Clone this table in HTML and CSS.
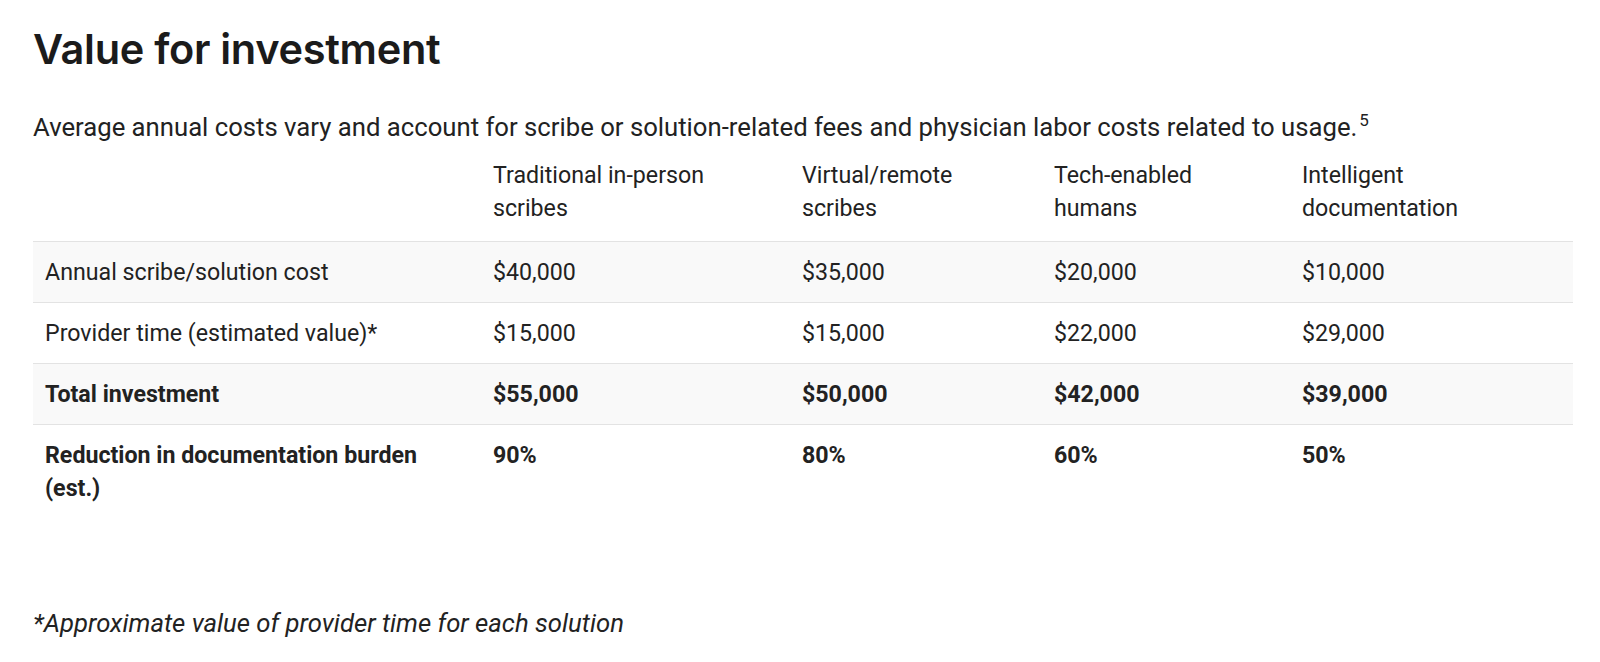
FILE: index.html
```html
<!DOCTYPE html>
<html lang="en">
<head>
<meta charset="utf-8">
<title>Value for investment</title>
<link rel="stylesheet" href="styles.css">
</head>
<body>
<main class="page">
  <h2 class="title">Value for investment</h2>
  <p class="intro">Average annual costs vary and account for scribe or solution-related fees and physician labor costs related to usage.<sup>5</sup></p>
  <table class="cost-table">
    <thead>
      <tr>
        <th class="label-col"></th>
        <th>Traditional in-person<br>scribes</th>
        <th>Virtual/remote<br>scribes</th>
        <th>Tech-enabled<br>humans</th>
        <th>Intelligent<br>documentation</th>
      </tr>
    </thead>
    <tbody>
      <tr class="shade">
        <td>Annual scribe/solution cost</td>
        <td>$40,000</td>
        <td>$35,000</td>
        <td>$20,000</td>
        <td>$10,000</td>
      </tr>
      <tr>
        <td>Provider time (estimated value)*</td>
        <td>$15,000</td>
        <td>$15,000</td>
        <td>$22,000</td>
        <td>$29,000</td>
      </tr>
      <tr class="shade strong">
        <td>Total investment</td>
        <td>$55,000</td>
        <td>$50,000</td>
        <td>$42,000</td>
        <td>$39,000</td>
      </tr>
      <tr class="strong last">
        <td>Reduction in documentation burden<br>(est.)</td>
        <td>90%</td>
        <td>80%</td>
        <td>60%</td>
        <td>50%</td>
      </tr>
    </tbody>
  </table>
  <p class="footnote">*Approximate value of provider time for each solution</p>
</main>
</body>
</html>
```
FILE: styles.css
```css
html, body {
  margin: 0;
  padding: 0;
  background: #ffffff;
}

.page {
  padding: 21px 27px 0 33px;
  font-family: Roboto, "Liberation Sans", sans-serif;
  color: #222222;
}

.title {
  margin: 0;
  font-family: Inter, "Open Sans", sans-serif;
  font-weight: 600;
  font-size: 41.5px;
  line-height: 56px;
  color: #1b1b1b;
  letter-spacing: -0.3px;
}

.intro {
  margin: 33px 0 0 0;
  font-size: 25.7px;
  line-height: 34px;
}

.intro sup {
  font-size: 17px;
  line-height: 0;
  vertical-align: 10px;
  margin-left: 2px;
}

.cost-table {
  width: 100%;
  border-collapse: collapse;
  margin-top: 15px;
  font-size: 23.2px;
  line-height: 33px;
}

.cost-table th {
  text-align: left;
  font-weight: 400;
  vertical-align: top;
  padding: 0 12px 16px 0;
}

.cost-table th.label-col {
  width: 448px;
}

.cost-table thead th:nth-child(2) { width: 297px; }
.cost-table thead th:nth-child(3) { width: 240px; }
.cost-table thead th:nth-child(4) { width: 236px; }

.cost-table td {
  vertical-align: top;
  padding: 14px 12px 13px 0;
  border-top: 1px solid #e3e3e3;
}

.cost-table td:first-child {
  padding-left: 12px;
}

.cost-table tr.shade td {
  background: #f9f9f9;
}

.cost-table tr.strong td {
  font-weight: 700;
}

.cost-table tr.last td {
  padding-bottom: 8px;
}

.footnote {
  margin: 93px 0 0 0;
  font-size: 25.7px;
  line-height: 34px;
  font-style: italic;
}
```
